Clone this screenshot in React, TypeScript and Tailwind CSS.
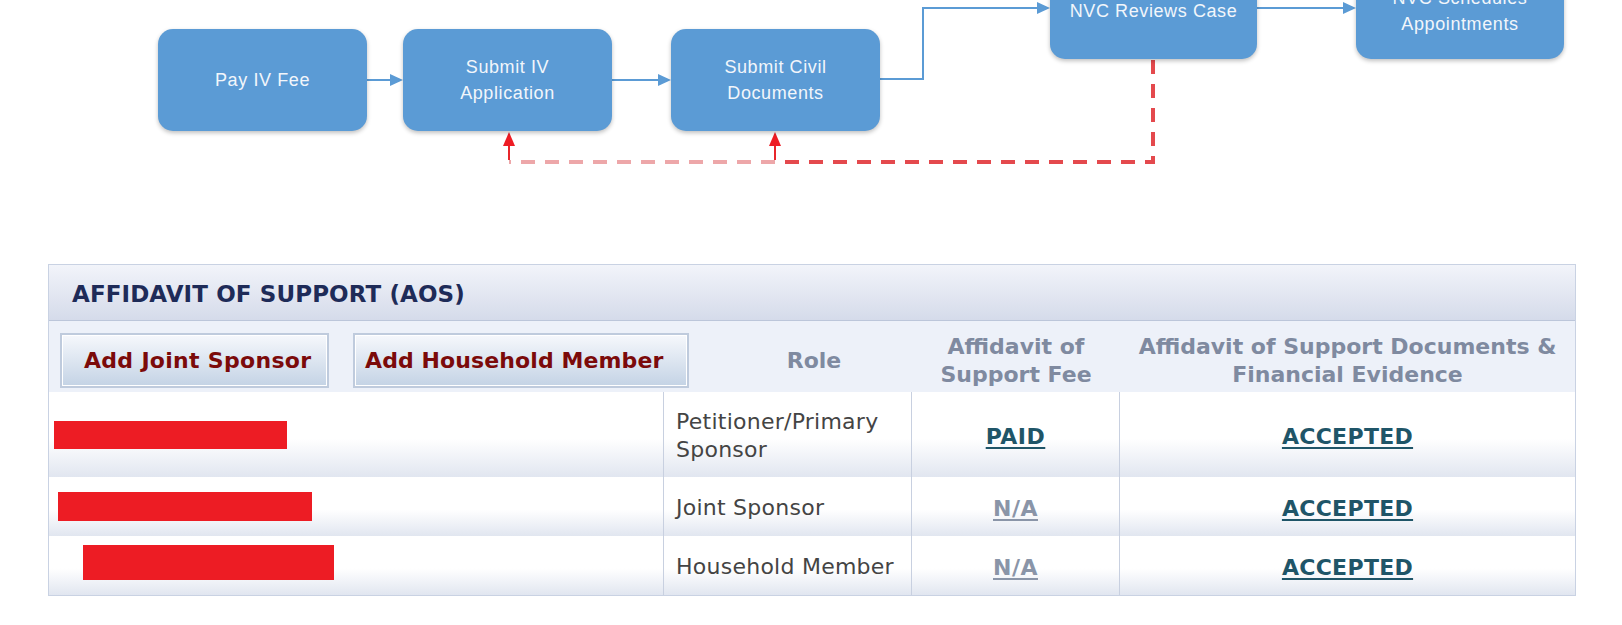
import React from "react";

type Node = { label: string[]; left: number; top: number; width: number };

const NODES: Node[] = [
  { label: ["Pay IV Fee"], left: 158, top: 29, width: 209 },
  { label: ["Submit IV", "Application"], left: 403, top: 29, width: 209 },
  { label: ["Submit Civil", "Documents"], left: 671, top: 29, width: 209 },
  { label: ["NVC Reviews Case"], left: 1050, top: -43, width: 207 },
  { label: ["NVC Schedules", "Appointments"], left: 1356, top: -43, width: 208 },
];

const ROWS = [
  { role: ["Petitioner/Primary", "Sponsor"], fee: "PAID", h: "h-[85px]", bar: "ml-[5px] w-[233px] h-[28px]" },
  { role: ["Joint Sponsor"], fee: "N/A", h: "h-[59px]", bar: "ml-[9px] w-[254px] h-[29px]" },
  { role: ["Household Member"], fee: "N/A", h: "h-[59px]", bar: "ml-[34px] w-[251px] h-[35px] mt-[-6px]" },
];

function Connectors() {
  const blue = "#5b9bd5";
  return (
    <svg className="absolute inset-0" width="1622" height="264">
      {/* blue flow arrows */}
      <g stroke={blue} strokeWidth="2" fill="none">
        <line x1="367" y1="80" x2="392" y2="80" />
        <line x1="612" y1="80" x2="660" y2="80" />
        <polyline points="880,79 923,79 923,8 1039,8" />
        <line x1="1257" y1="8" x2="1345" y2="8" />
      </g>
      <g fill={blue}>
        <polygon points="390,74 403,80 390,86" />
        <polygon points="658,74 671,80 658,86" />
        <polygon points="1037,2 1050,8 1037,14" />
        <polygon points="1343,2 1356,8 1343,14" />
      </g>
      {/* red return path */}
      <g strokeWidth="4" fill="none" strokeDasharray="14 10">
        <polyline points="1153,60 1153,162 777,162" stroke="#e4494d" />
        <line x1="775" y1="162" x2="509" y2="162" stroke="#eda7a9" />
      </g>
      <g stroke="#e8262b" strokeWidth="2">
        <line x1="509" y1="160" x2="509" y2="142" />
        <line x1="775" y1="160" x2="775" y2="142" />
      </g>
      <g fill="#ee1c24">
        <polygon points="509,132 503,146 515,146" />
        <polygon points="775,132 769,146 781,146" />
      </g>
    </svg>
  );
}

export default function App() {
  return (
    <div className="w-[1622px] h-[625px] overflow-hidden bg-white font-['DejaVu_Sans',Verdana,sans-serif]">
      {/* Process diagram */}
      <div className="relative h-[264px]">
        <Connectors />
        {NODES.map(n => (
          <div
            key={n.label.join(" ")}
            className={`absolute h-[102px] rounded-[15px] bg-[#5b9bd5] shadow-[0_2px_4px_rgba(0,0,0,0.25)] flex flex-col items-center justify-center text-[#f2f6fb] text-[18px] leading-[26px] tracking-[0.6px] font-['Liberation_Sans',Arial,sans-serif] ${
              n.top < 0 ? "pt-[5px]" : ""
            }`}
            style={{ left: n.left, top: n.top, width: n.width }}
          >
            {n.label.map(l => (
              <span key={l}>{l}</span>
            ))}
          </div>
        ))}
      </div>

      {/* Affidavit of support table */}
      <div className="ml-[48px] w-[1528px] border border-[#c9d2e3]">
        <div className="h-[56px] flex items-center pl-[23px] pt-[3px] bg-gradient-to-b from-[#f2f4fa] to-[#d5dbea] border-b border-[#bcc6da]">
          <h2 className="text-[23px] font-bold tracking-[0.1px] text-[#1e2b58]">AFFIDAVIT OF SUPPORT (AOS)</h2>
        </div>

        <div className="h-[71px] grid grid-cols-[667px_196px_208px_1fr] bg-[#edf1f9]">
          <div className="flex items-end gap-[24px] pl-[11px] pb-[4px]">
            <button className="w-[269px] h-[55px] pl-[22px] text-left border-2 border-[#bfcbdd] bg-gradient-to-b from-[#f6f8fc] to-[#c4d3e5] shadow-[inset_0_0_0_1px_#ffffff] text-[22px] font-bold tracking-[0.3px] text-[#7b0a0a]">
              Add Joint Sponsor
            </button>
            <button className="w-[336px] h-[55px] pl-[10px] text-left border-2 border-[#bfcbdd] bg-gradient-to-b from-[#f6f8fc] to-[#c4d3e5] shadow-[inset_0_0_0_1px_#ffffff] text-[22px] font-bold tracking-[0.1px] text-[#7b0a0a]">
              Add Household Member
            </button>
          </div>
          <div className="flex items-center justify-center pt-[8px] text-[22px] leading-[28px] font-bold text-[#7f8aa0]">Role</div>
          <div className="flex items-center justify-center pt-[8px] text-center text-[22px] leading-[28px] font-bold text-[#7f8aa0]">
            Affidavit of<br />Support Fee
          </div>
          <div className="flex items-center justify-center pt-[8px] text-center text-[22px] leading-[28px] font-bold text-[#7f8aa0]">
            Affidavit of Support Documents &amp;<br />Financial Evidence
          </div>
        </div>

        {ROWS.map((r, i) => (
          <div
            key={i}
            className={`${r.h} grid grid-cols-[615px_248px_208px_1fr] bg-gradient-to-b from-white from-55% to-[#e1e6f0]`}
          >
            <div className="flex items-center border-r border-[#c8d0e0]">
              <div className={`${r.bar} bg-[#ed1c24]`} />
            </div>
            <div className="flex flex-col justify-center pl-[12px] pt-[3px] border-r border-[#c8d0e0] text-[22px] leading-[28px] tracking-[0.25px] text-[#444444]">
              {r.role.map(l => (
                <span key={l}>{l}</span>
              ))}
            </div>
            <div className="flex items-center justify-center pt-[3px] border-r border-[#c8d0e0]">
              <a
                className={`text-[22px] font-bold tracking-[0.5px] underline decoration-2 underline-offset-[3px] ${
                  r.fee === "PAID" ? "text-[#1f5568]" : "text-[#8a95a8]"
                }`}
              >
                {r.fee}
              </a>
            </div>
            <div className="flex items-center justify-center pt-[3px]">
              <a className="text-[22px] font-bold tracking-[0.3px] underline decoration-2 underline-offset-[3px] text-[#1f5568]">ACCEPTED</a>
            </div>
          </div>
        ))}
      </div>
    </div>
  );
}
